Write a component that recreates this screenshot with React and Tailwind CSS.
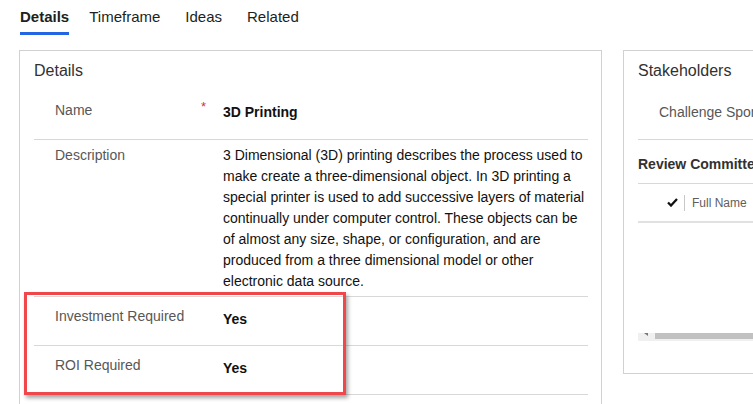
import React from 'react';

const descLines = [
  '3 Dimensional (3D) printing describes the process used to',
  'make create a three-dimensional object. In 3D printing a',
  'special printer is used to add successive layers of material',
  'continually under computer control. These objects can be',
  'of almost any size, shape, or configuration, and are',
  'produced from a three dimensional model or other',
  'electronic data source.',
];

function Tabs() {
  const tabs = [
    { name: 'Details', ml: 'ml-[20px]' },
    { name: 'Timeframe', ml: 'ml-[20px]' },
    { name: 'Ideas', ml: 'ml-[25px]' },
    { name: 'Related', ml: 'ml-[25px]' },
  ];
  return (
    <div className="flex h-[50px]">
      {tabs.map((t, i) => (
        <div key={t.name} className={`flex flex-col pt-[7px] ${t.ml}`}>
          <span className={`text-[15px] leading-[20px] text-[#201f1e] ${i === 0 ? 'font-semibold' : ''}`}>{t.name}</span>
          {i === 0 && <span className="mt-[5px] h-[3px] w-full bg-[#2266e3]" />}
        </div>
      ))}
    </div>
  );
}

function Row({ label, required, children, className = '', valueClass = '' }) {
  return (
    <div className={`flex items-start border-b border-[#d8d8d8] pl-[21px] ${className}`}>
      <span className="w-[146px] shrink-0 text-[14px] leading-[20px] text-[#575757]">{label}</span>
      <span className="w-[22px] shrink-0 text-[13px] leading-[14px] text-[#d13438]">{required ? '*' : ''}</span>
      <div className={`text-[14px] text-[#111] ${valueClass}`}>{children}</div>
    </div>
  );
}

function DetailsPanel() {
  return (
    <section className="w-[583px] h-[400px] shrink-0 border border-[#d1d1d1] pl-[14px] pr-[13px] pt-[9px]">
      <h2 className="text-[16px] leading-[22px] text-[#323130]">Details</h2>
      <div className="mt-[8px]">
        <Row label="Name" required className="h-[50px] pt-[10px]" valueClass="mt-[2px] leading-[20px] font-semibold">
          3D Printing
        </Row>
        <Row label="Description" className="h-[157px] pt-[5px]" valueClass="leading-[21px] whitespace-nowrap">
          {descLines.map((l) => (
            <span key={l} className="block">{l}</span>
          ))}
        </Row>
        <div className="relative">
          <Row label="Investment Required" className="h-[49px] pt-[9px]" valueClass="mt-[3px] leading-[20px] font-bold">
            Yes
          </Row>
          <Row label="ROI Required" className="h-[49px] pt-[9px]" valueClass="mt-[3px] leading-[20px] font-bold">
            Yes
          </Row>
          <div className="pointer-events-none absolute left-[-10px] top-[-5px] w-[322px] h-[103px] border-[3px] border-[#f0474b] shadow-[2px_3px_4px_rgba(0,0,0,0.35)]" />
        </div>
      </div>
    </section>
  );
}

function StakeholdersPanel() {
  return (
    <section className="w-[320px] h-[324px] shrink-0 border border-[#d1d1d1] pl-[14px] pt-[9px]">
      <h2 className="text-[16px] leading-[22px] text-[#323130] whitespace-nowrap">Stakeholders</h2>
      <div className="mt-[8px] h-[50px] border-b border-[#d8d8d8] pl-[21px] pt-[10px]">
        <span className="text-[14px] leading-[20px] text-[#575757] whitespace-nowrap">Challenge Sponsor</span>
      </div>
      <div className="h-[44px] border-b border-[#d8d8d8] pt-[12px]">
        <span className="text-[14px] leading-[20px] font-semibold text-[#323130] whitespace-nowrap">Review Committee</span>
      </div>
      <div className="flex items-center h-[39px] border-b-2 border-[#e1e1e1] pl-[29px]">
        <svg width="11" height="9" viewBox="0 0 11 9" className="shrink-0">
          <path d="M1 4.5 L4 7.5 L10 1" fill="none" stroke="#111" strokeWidth="2.3" />
        </svg>
        <span className="ml-[6px] h-[16px] w-px bg-[#c8c8c8]" />
        <span className="ml-[7px] text-[12px] leading-[16px] text-[#605e5c] whitespace-nowrap">Full Name</span>
        <svg width="6" height="9" viewBox="0 0 6 9" className="ml-[5px] shrink-0">
          <path d="M3 8 V1 M1 3 L3 1 L5 3" fill="none" stroke="#8a8886" strokeWidth="1" />
        </svg>
      </div>
      <div className="mt-[110px] flex h-[8px] bg-[#f0f0f0]">
        <div className="relative w-[17px] shrink-0">
          <svg width="4" height="3" viewBox="0 0 4 3" className="absolute left-[6px] top-0">
            <path d="M0 0 H4 V3 Z" fill="#777" />
          </svg>
        </div>
        <div className="flex-1 h-[6px] bg-[#c1c1c1]" />
      </div>
    </section>
  );
}

export default function App() {
  return (
    <div className="w-[753px] h-[404px] overflow-hidden bg-white font-['Liberation_Sans',Arial,sans-serif]">
      <Tabs />
      <div className="flex gap-[21px] pl-[19px]">
        <DetailsPanel />
        <StakeholdersPanel />
      </div>
    </div>
  );
}
